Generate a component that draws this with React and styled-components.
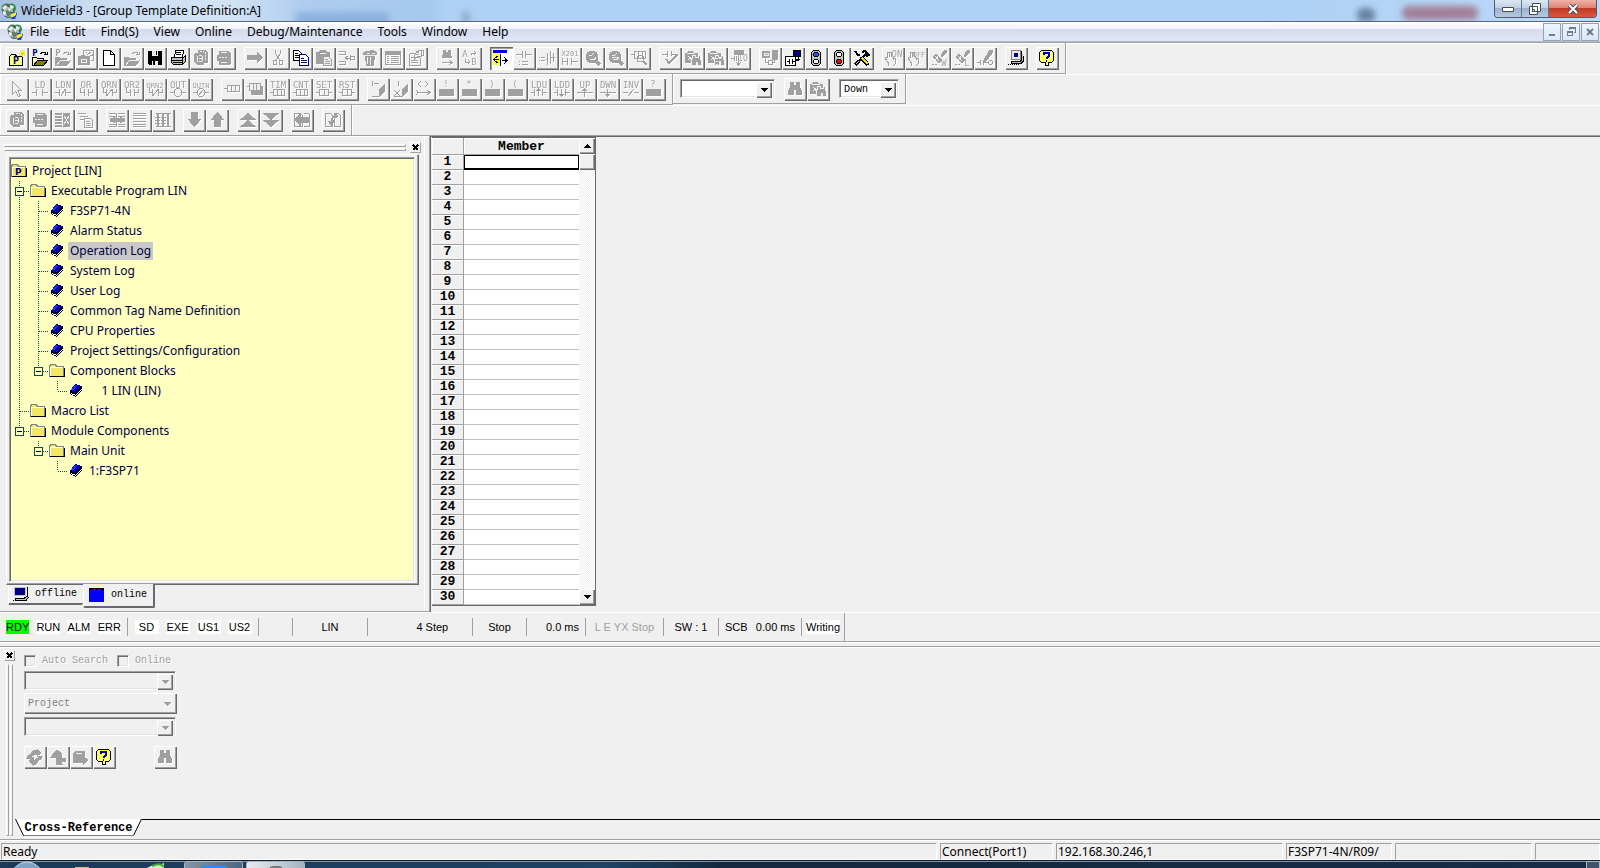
import React from "react";
import styled, { createGlobalStyle, css } from 'styled-components';

const GlobalStyle = createGlobalStyle `
    * { box-sizing: border-box; }
    body {
        margin: 0;
        background: #f0f0f0;
        color: #000;
        font-family: "Noto Sans", "Open Sans", sans-serif;
        font-size: 12px;
        line-height: 16px;
    }
    button, select, input { font: inherit; color: inherit; }
    ul { list-style: none; margin: 0; padding: 0; }
`

const mono = css `
    font-family: "Liberation Mono", monospace;
    font-size: 10px;
`

const sunken = css `
    border: 1px solid;
    border-color: #a0a0a0 #fff #fff #a0a0a0;
    box-shadow: inset 1px 1px 0 #696969, inset -1px -1px 0 #e3e3e3;
`

const raised = css `
    border: 0;
    background: #f0f0f0;
    box-shadow: inset 1px 1px 0 #fff, inset -1px -1px 0 #696969, inset -2px -2px 0 #a0a0a0;
`

const Shell = styled.div `
    display: flex;
    flex-direction: column;
    height: 100vh;
    min-height: 860px;
    overflow: hidden;
`

/* ---------- title and menu ---------- */

const TitleBar = styled.header `
    position: relative;
    display: flex;
    align-items: center;
    flex: none;
    height: 22px;
    padding-left: 1px;
    background: linear-gradient(90deg, #a3bfe2 0, #c9dcf1 90px, #d3e3f5 230px, #b0cdef 300px, #a6c8ee 430px, #afd1f5 445px, #afd1f5 80%, #bcd9f8 100%);
    border-bottom: 1px solid #5a6675;
    overflow: hidden;
`

const Title = styled.h1 `
    position: relative;
    flex: 1;
    margin: 0 0 0 4px;
    font-size: 12px;
    font-weight: 400;
    line-height: 20px;
`

const Smudge = styled.span `
    position: absolute;
    top: ${p => p.$top}px;
    right: ${p => p.$right}px;
    width: ${p => p.$width}px;
    height: 14px;
    border-radius: 6px;
    background: ${p => p.$color};
    filter: blur(3px);
`

const CaptionGroup = styled.div `
    position: relative;
    display: flex;
    align-self: flex-start;
    height: 18px;
    margin-right: 3px;
    border: 1px solid #4c5a6b;
    border-top: 0;
    border-radius: 0 0 4px 4px;
    overflow: hidden;
`

const CaptionButton = styled.button `
    display: flex;
    justify-content: center;
    align-items: center;
    width: ${p => p.$close ? 47 : 27}px;
    padding: 0;
    border: 0;
    border-right: ${p => p.$close ? '0' : '1px solid #65758a'};
    background: ${p => p.$close
        ? 'linear-gradient(#efb3a8 0, #dd8474 45%, #c03a24 50%, #d9583c 100%)'
        : 'linear-gradient(#dbe7f4 0, #c3d2e4 45%, #9bb0ca 50%, #b6cae2 100%)'};
`

const MenuBar = styled.nav `
    display: flex;
    align-items: center;
    flex: none;
    height: 20px;
    padding-left: 7px;
    background: linear-gradient(#fff 0, #f0f3f9 35%, #d4dbed 36%, #dfe5f7 95%);
    border-bottom: 1px solid #b6bccc;
`

const MenuList = styled.div `
    display: flex;
    gap: 15px;
    margin-left: 7px;
`

const MenuItem = styled.button `
    padding: 0;
    border: 0;
    background: none;
    line-height: 18px;
`

const MdiButtons = styled.div `
    display: flex;
    gap: 1px;
    margin-left: auto;
    padding-right: 1px;
`

const MdiButton = styled.button `
    display: flex;
    justify-content: center;
    align-items: center;
    width: 18px;
    height: 18px;
    padding: 0;
    border: 1px solid #93a3b5;
    background: linear-gradient(#eef5fc, #d8e8f8);
`

/* ---------- toolbars ---------- */

const ToolRow = styled.div `
    display: flex;
    flex: none;
    height: 31px;
    box-shadow: inset 0 1px 0 #fff;
`

const FirstRow = styled(ToolRow) `
    height: 32px;
    border-top: 1px solid #a0a0a0;
`

const LastRow = styled(ToolRow) `
    height: 30px;
`

const ToolBar = styled.div `
    display: flex;
    align-items: flex-start;
    gap: 8px;
    height: 31px;
    padding: 4px 6px 0;
    border-right: 1px solid #a0a0a0;
    border-bottom: 1px solid #a0a0a0;
    box-shadow: inset 0 1px 0 #fff, 1px 0 0 #fff, inset 1px 0 0 #fff;
`

const SearchBar = styled(ToolBar) `
    height: 30px;
    gap: 9px;
    padding-left: 7px;
    label { margin-top: 1px; }
`

const BlockBar = styled(ToolBar) `
    height: 30px;
    border-bottom: 0;
`

const ToolGroup = styled.div `
    display: flex;
`

const ToolButton = styled.button `
    width: 23px;
    height: 23px;
    padding: 3px 4px 4px 3px;
    color: #000;
    ${raised}
    &:disabled { color: #a0a0a0; }
    &:disabled svg { filter: drop-shadow(1px 1px 0 #fff); }
    ${p => p.$pressed && css `
        background: #fafafa;
        box-shadow: inset 1px 1px 0 #696969, inset 2px 2px 0 #a0a0a0, inset -1px -1px 0 #fff;
    `}
`

const IconSvg = styled.svg `
    display: block;
    flex: none;
    overflow: visible;
    shape-rendering: crispEdges;
    fill: none;
    stroke: currentColor;
    stroke-width: 1;
    text {
        font-family: "DejaVu Sans Mono", monospace;
        fill: currentColor;
        stroke: none;
        text-anchor: middle;
    }
    .f { fill: currentColor; }
`

const Combo = styled.label `
    display: grid;
    grid-template-columns: 1fr 16px;
    width: ${p => p.$width}px;
    height: ${p => p.$flat ? 21 : 19}px;
    padding: 2px;
    background: ${p => p.$disabled ? '#f0f0f0' : '#fff'};
    ${mono}
    ${p => p.$flat ? raised : sunken}
`

const ComboSelect = styled.select `
    grid-area: 1 / 1 / 2 / 3;
    width: 100%;
    padding: 0 0 0 2px;
    border: 0;
    appearance: none;
    background: transparent;
    &:disabled { color: #808080; opacity: 1; }
`

const ComboArrow = styled.span `
    grid-area: 1 / 2 / 2 / 3;
    display: flex;
    justify-content: center;
    align-items: center;
    pointer-events: none;
    color: ${p => p.$disabled ? '#a0a0a0' : '#000'};
    ${p => !p.$flat && raised}
`

/* ---------- workspace ---------- */

const Workspace = styled.main `
    display: flex;
    flex: 1;
    min-height: 0;
    border-top: 1px solid #a0a0a0;
`

const ProjectDock = styled.aside `
    display: flex;
    flex-direction: column;
    width: 430px;
    flex: none;
    padding: 5px 10px 5px 6px;
    border-right: 1px solid #a0a0a0;
    border-bottom: 1px solid #a0a0a0;
    box-shadow: inset 0 1px 0 #fff, inset -4px 0 0 #f0f0f0, inset -5px 0 0 #fff;
`

const DockHeader = styled.div `
    display: flex;
    align-items: center;
    height: 13px;
    gap: 4px;
    margin: 0 -2px;
`

const Gripper = styled.div `
    display: grid;
    flex: 1;
    gap: 1px;
    ${p => p.$vertical ? 'grid-template-columns: 3px 3px;' : 'grid-template-rows: 3px 3px;'}
    span {
        border: 1px solid;
        border-color: #fff #a0a0a0 #a0a0a0 #fff;
    }
`

const CloseButton = styled.button `
    display: flex;
    justify-content: center;
    align-items: center;
    width: 11px;
    height: 11px;
    flex: none;
    padding: 0;
    border: 1px solid;
    border-color: #fff #a0a0a0 #a0a0a0 #fff;
    background: #f0f0f0;
`

const TreeFrame = styled.div `
    flex: 1;
    min-height: 0;
    padding: 2px 3px 2px 2px;
    border: 1px solid;
    border-color: #fff #696969 #696969 #fff;
    box-shadow: inset -1px -1px 0 #a0a0a0;
`

const Tree = styled.ul `
    height: 100%;
    background: #ffffc0;
    color: #000040;
    overflow: hidden;
    ${sunken}
    && { padding-top: 3px; }
`

const TreeRow = styled.li `
    display: flex;
    align-items: center;
    height: 20px;
`

const TreeLabel = styled.span `
    padding: 0 2px;
    margin-left: 1px;
    white-space: pre;
    line-height: 18px;
    background: ${p => p.$selected ? '#c8c8c8' : 'transparent'};
`

const TabStrip = styled.div `
    display: flex;
    align-items: flex-start;
    height: 21px;
    padding-left: 2px;
    ${mono}
`

const DockTab = styled.button `
    display: flex;
    align-items: center;
    gap: 6px;
    height: ${p => p.$active ? 24 : 20}px;
    margin-top: ${p => p.$active ? -1 : 0}px;
    padding: 0 6px 0 ${p => p.$active ? 5 : 4}px;
    border: 1px solid;
    border-width: 0 2px 2px 1px;
    border-color: #fff #696969 #696969 #fff;
    border-right: ${p => p.$active ? '2px solid #696969' : '0'};
    border-radius: 0 0 2px 2px;
    background: #f0f0f0;
    font-family: inherit;
`

const MdiArea = styled.section `
    flex: 1;
    min-width: 0;
    padding-left: 1px;
    border-top: 1px solid #696969;
    border-left: 1px solid #696969;
`

const MemberWindow = styled.div `
    display: flex;
    width: 164px;
    border: 1px solid #696969;
    border-width: 1px 1px 1px 0;
`

const MemberTable = styled.table `
    width: 147px;
    table-layout: fixed;
    border-collapse: separate;
    border-spacing: 0;
    background: #fff;
    font-family: "Liberation Mono", monospace;
    font-size: 13px;
    line-height: 14px;
    th {
        height: 15px;
        padding: 0;
        background: #f0f0f0;
        border-right: 1px solid #a0a0a0;
        border-bottom: 1px solid #a0a0a0;
        box-shadow: inset 1px 1px 0 #fff;
    }
    thead th {
        height: 17px;
        padding-top: 2px;
    }
    thead th:last-child { border-right: 0; }
    td {
        height: 15px;
        padding: 0;
        border-bottom: 1px solid #c0c0c0;
    }
`

const CurrentCell = styled.td `
    box-shadow: inset 1px 1px 0 #000, inset -1px -1px 0 #000;
    border-bottom-color: #000 !important;
`

const ScrollBar = styled.div `
    display: flex;
    flex-direction: column;
    justify-content: space-between;
    width: 16px;
    background: repeating-conic-gradient(#fff 0 25%, #f0f0f0 0 50%) 0 0 / 2px 2px;
`

const ScrollButton = styled.button `
    display: flex;
    justify-content: center;
    align-items: center;
    width: 16px;
    height: 16px;
    padding: 0;
    ${raised}
`

/* ---------- cpu status ---------- */

const CpuBar = styled.div `
    display: flex;
    flex: none;
    height: 30px;
    border-top: 1px solid #fff;
    border-bottom: 1px solid #a0a0a0;
    box-shadow: 0 1px 0 #fff;
    font-family: "Liberation Sans", Arial, sans-serif;
    font-size: 11px;
    line-height: 14px;
`

const CpuCells = styled.div `
    display: flex;
    align-items: center;
    border-right: 1px solid #a0a0a0;
`

const CpuCell = styled.div `
    display: flex;
    align-items: center;
    justify-content: ${p => p.$align || 'center'};
    gap: 7px;
    width: ${p => p.$width}px;
    height: 18px;
    padding: 0 6px;
    white-space: nowrap;
    color: ${p => p.$off ? '#a0a0a0' : '#000'};
    border-right: ${p => p.$last ? '0' : '1px solid #a0a0a0'};
`

const Lamp = styled.span `
    width: ${p => p.$wide ? 34 : 24}px;
    background: ${p => p.$on ? '#00ff00' : '#fff'};
    text-align: center;
`

/* ---------- cross reference ---------- */

const CrossDock = styled.section `
    display: flex;
    flex: none;
    height: 194px;
    margin-top: 4px;
    padding: 3px 0 3px 4px;
    border-top: 1px solid #a0a0a0;
    border-bottom: 1px solid #a0a0a0;
    box-shadow: inset 0 1px 0 #fff, 0 1px 0 #fff;
`

const CrossSide = styled.div `
    display: flex;
    flex-direction: column;
    gap: 3px;
    width: 11px;
`

const VerticalGrip = styled(Gripper) `
    margin-left: 2px;
`

const CrossBody = styled.div `
    display: flex;
    flex: 1;
    flex-direction: column;
    justify-content: space-between;
`

const CrossForm = styled.form `
    display: flex;
    flex-direction: column;
    gap: 3px;
    width: 162px;
    padding: 3px 0 0 9px;
    ${mono}
`

const CheckRow = styled.div `
    display: flex;
    gap: 9px;
    height: 15px;
    white-space: nowrap;
`

const Check = styled.label `
    display: flex;
    align-items: center;
    gap: 6px;
    color: #a0a0a0;
    text-shadow: 1px 1px 0 #fff;
`

const CheckInput = styled.input `
    width: 12px;
    height: 12px;
    margin: 0;
    appearance: none;
    ${sunken}
`

const CrossButtons = styled.div `
    display: flex;
    justify-content: space-between;
    padding-top: 7px;
`

const SheetTabs = styled.div `
    display: flex;
    height: 17px;
`

const SheetTab = styled.button `
    position: relative;
    width: 127px;
    padding: 1px 0 0;
    border: 0;
    background: none;
    font-family: "Liberation Mono", monospace;
    font-size: 12px;
    font-weight: 700;
    line-height: 16px;
    svg {
        position: absolute;
        top: 0;
        left: 0;
    }
    span { position: relative; }
`

const SheetLine = styled.div `
    flex: 1;
    border-top: 1px solid #000;
`

/* ---------- bottom ---------- */

const StatusBar = styled.footer `
    display: flex;
    flex: none;
    gap: 3px;
    height: 20px;
    padding: 3px 0 0 1px;
    line-height: 15px;
`

const StatusCell = styled.div `
    flex: ${p => p.$width ? `0 0 ${p.$width}px` : '1'};
    height: 17px;
    padding-left: 1px;
    border: 1px solid;
    border-color: #a0a0a0 #fff #fff #a0a0a0;
    white-space: nowrap;
    overflow: hidden;
`

const TaskBar = styled.div `
    display: flex;
    align-items: flex-start;
    flex: none;
    height: 8px;
    background: linear-gradient(90deg, #1c3a58 0, #1d4263 38%, #14293f 45%, #152c45 100%);
    border-top: 1px solid #10202f;
    box-shadow: inset 0 1px 0 #8094a8;
    overflow: hidden;
`

const TaskItem = styled.button `
    display: flex;
    justify-content: center;
    width: 59px;
    height: 20px;
    margin-right: 3px;
    padding: 4px 0 0;
    border: 1px solid #a9b8c6;
    border-radius: 3px;
    background: ${p => p.$active ? 'linear-gradient(90deg, #e8ecf0, #a5b3c0)' : 'linear-gradient(90deg, #8495a5, #4b6580)'};
    span {
        width: ${p => p.$active ? 14 : 28}px;
        height: 12px;
        border-radius: 4px;
        background: ${p => p.$active ? '#777' : '#1e90ff'};
    }
`

const StartSvg = styled.svg `
    flex: none;
    margin-right: 19px;
`

const ShowDesktop = styled.span `
    width: 14px;
    height: 20px;
    margin-left: auto;
    border: 1px solid #a9b8c6;
    background: #3f5468;
`

/* ---------- icon drawings, all on a 16 x 16 grid ---------- */

const gate = (label, lower) => (
    <>
        <text x="8" y="7" fontSize={label.length > 3 ? 7 : 9}>{label}</text>
        <path d={lower} />
    </>
)

const CONTACT = 'M0 11.5h5M4.5 8v7M10.5 8v7M11 11.5h5'
const NOT = 'M0 11.5h5M4.5 8v7M6 14.5l4-6M10.5 8v7M11 11.5h5'
const BRANCH = 'M2.5 7v4.5h4M6.5 8v7M10.5 8v7M11 11.5h3.5v-4'
const BRANCH_NOT = 'M2.5 7v4.5h3M5.5 8v7M6 14.5l5-6M11.5 8v7M12 11.5h3.5v-4'
const BOX = 'M0 11.5h3M3.5 8.5h11v6h-11zM7.5 8.5v6M11.5 8.5v6'
const SMALL_BOX = 'M0 11.5h3M3.5 8.5h9v6h-9zM8.5 8.5v6M13 11.5h3'

const folder = (front, back, line) => (
    <>
        <path d="M.5 15.5v-8h4l1 1h6v2" fill={back} stroke={line} />
        <path d="M1.5 15.5l4-5h10l-4 5z" fill={front} stroke={line} />
        <path d="M8 3.5h1l1-1h3l1 2M12 4.5h3v-3" />
    </>
)

// stacked sheets with a block number on the front one
const pages = (
    <>
        <path className="f" d="M5.5 .5h7l2 2v10h-3v-9h-6z" />
        <path className="f" d="M2.5 3.5h8v11h-6l-3-3v-7z" />
        <path d="M4 6v6M6 5.5h3M6 8.5h3M6 11.5h3M9.500 6v5" stroke="#f0f0f0" />
        <path d="M12.5 2v8M7 1.500h4" stroke="#f0f0f0" strokeDasharray="2 1" />
    </>
)

const printout = (
    <>
        <path className="f" d="M3.5 4.500v-3h9l2 2v6h-2v-5z" />
        <path className="f" d="M1.5 5.5h11v5h-11zM3.500 11.500h9l2-1v3l-2 1h-9z" />
        <path d="M3 7.5h2M6 7.5h2M9 7.5h2M5 12.500h6M5 2.500h6" stroke="#f0f0f0" />
    </>
)

const lens = (
    <>
        <circle cx="7" cy="7" r="6" fill="currentColor" />
        <path d="M11 11l4 4" strokeWidth="3" />
        <path d="M4 5.5h2l3-2M5 9.5h4l2-2" stroke="#f0f0f0" />
    </>
)

const binoculars = (
    <path className="f" d="M3.500 1.500h3v3h3v-3h3v4l2 5v3h-5v-5h-3v5h-5v-3l2-5z" />
)

const searchFolder = (
    <>
        <path className="f" d="M.5 3.500h2l1-2h4l1 2h4v9h-12z" />
        <path d="M2 3.500h8" stroke="#f0f0f0" />
        <path d="M3 6l5 6M3 10l3-3" stroke="#f0f0f0" />
        <path className="f" d="M8 5h2v2h3v-2h2l1 5v5h-4v-3h-1v3h-5v-3z" stroke="#f0f0f0" />
    </>
)

const brush = letter => (
    <>
        <path className="f" d="M10 5l4-5h2l-1 3-4 4zM5 4l6 6-3 3-6-6z" />
        <path d="M4 6l4 5M8 5l-4 5M0 13h1M3 15h1M2 11h1" stroke="#f0f0f0" />
        <path d="M1 14.500h2M4 14.500h2" />
        <text x="13" y="16" fontSize="9">{letter}</text>
    </>
)

const hand = word => (
    <>
        <path d="M3.500 16v-3l-3-4v-2h2v-5h2v5M4.500 4v-2h2v5M6.500 7h2v3M8.500 8h2v5l-2 3" />
        <text x={word.length > 2 ? 11 : 12} y="7" fontSize={word.length > 2 ? 7 : 9}>{word}</text>
    </>
)

const help = (
    <>
        <path d="M2.500 .5h10l2 2v8l-2 2h-3v3h-3v-3h-4l-2-2v-8z" fill="#ffff60" stroke="#000" />
        <path d="M5 5v-2h5v3l-2.500 2v1M7 11h1" stroke="#00009c" strokeWidth="2" />
    </>
)

const light = (top, bottom) => (
    <>
        <path d="M5.500 .5h5l2 2v11l-2 2h-5l-2-2v-11z" fill="#c0c0c0" stroke="#000" />
        <circle cx="8" cy="4.500" r="2.500" fill={top} stroke="#000" />
        <circle cx="8" cy="11.500" r="2.500" fill={bottom} stroke="#000" />
    </>
)

const computer = (
    <>
        <path d="M3.500 .5h9v9h-9z" fill="#e8e8e8" stroke="#808080" />
        <path d="M6 3h4v4h-4z" fill="#000080" stroke="none" />
        <path d="M13.500 1v9l-1 1h-9v2h10l2-2v-5" stroke="#000" fill="#c0c0c0" />
        <path d="M0 14.500h11" stroke="#000" strokeDasharray="1 1" />
    </>
)

const block = mark => (
    <>
        <text x="7" y="6" fontSize="9">{mark}</text>
        <path className="f" d="M.5 8.500h14v6h-14z" />
    </>
)

const ICONS = {
    newProject: (
        <>
            <path d="M.5 15.500v-9l2-2h4l1 2h6v9z" fill="#ffff80" stroke="#000" />
            <text x="7" y="14" fontSize="10" fontWeight="700" style={{ fill: '#000080' }}>P</text>
            <path d="M13.500 0v7M10 3.500h6M11 1l5 5M16 1l-5 5" stroke="#f0e000" />
        </>
    ),
    openProject: (
        <>
            {folder('#808000', '#ffff80', '#000')}
            <text x="3" y="6" fontSize="9" fontWeight="700" style={{ fill: '#000080' }}>P</text>
        </>
    ),
    openProjectOff: (
        <>
            {folder('currentColor', 'currentColor', 'currentColor')}
            <path d="M5 10.500h10M5 11l-3 4" stroke="#f0f0f0" />
            <text x="3" y="6" fontSize="9" fontWeight="700">P</text>
        </>
    ),
    closeProject: (
        <>
            <path d="M5.500 5v-4.500h10v10h-3M8 2.500h1M9 5l4-3M12 5.500h2v-2" />
            <path className="f" d="M.5 6.500h2l1-1h3l1 1h4v8h-11z" />
            <path d="M3 9.500h6M3 9v4M3 12.500h6M8.500 9v4" stroke="#f0f0f0" />
        </>
    ),
    newFile: <path d="M2.500 .5h7l4 4v11h-11zM9.500 .5v4h4" fill="#fff" />,
    open: (
        <>
            {folder('currentColor', 'currentColor', 'currentColor')}
            <path d="M5 10.500h10M5 11l-3 4" stroke="#f0f0f0" />
        </>
    ),
    save: (
        <>
            <path className="f" d="M1.500 1.500h13v13h-12l-1-1z" />
            <path d="M5 1h6v5h-6zM5 11h6v4h-6z" fill="#f0f0f0" stroke="none" />
            <path d="M9 1h1v4h-1zM6 11h2v4h-2z" fill="#000" stroke="none" />
        </>
    ),
    print: (
        <>
            <path d="M4.500 7.500l1-7h8l-1 7" fill="#fff" />
            <path d="M6 2.500h5M6 4.500h5" />
            <path d="M1.500 7.500h12l2-2v6l-3 3h-9l-2-2z" fill="#c0c0c0" />
            <path d="M2 10.500h11M3 12.500h9M12.500 8v6" />
            <path d="M8 11.500h3" stroke="#e0e000" />
        </>
    ),
    pages,
    printout,
    go: <path className="f" d="M.5 5.500h10v-3l5 5-5 5v-3h-10z" />,
    cut: (
        <>
            <path d="M5.500 0v3l4 7M10.500 0v3l-4 7" />
            <path d="M3.500 10.500h3v4h-3zM9.500 10.500h3v4h-3z" />
        </>
    ),
    copy: (
        <>
            <path d="M.5 .5h5l3 3v7h-8z" fill="#fff" />
            <path d="M2 3.500h3M2 5.500h5M2 7.500h5" />
            <path d="M6.500 4.500h6l3 3v8h-9z" fill="#fff" stroke="#000080" />
            <path d="M8 8.500h3M8 10.500h6M8 12.500h6" stroke="#000080" />
        </>
    ),
    paste: (
        <>
            <path className="f" d="M.5 2.500h3l1-2h5l1 2h3v11h-13z" />
            <path d="M4 3.500h6" stroke="#f0f0f0" />
            <path d="M7.500 6.500h5l3 3v6h-8z" fill="#f0f0f0" />
            <path d="M9 9.500h3M9 11.500h5M9 13.500h5" />
        </>
    ),
    insertRow: <path d="M0 1.500h6.500v3h-6.500M0 11.500h6.500v3h-6.500M7 8h5M8.500 6l-2 2 2 2M11.500 5v6M11.500 6.500h4v3h-4" />,
    trash: (
        <>
            <path className="f" d="M1.500 2.500l3-1h3l1-1h3l3 2v2h-13z" />
            <path className="f" d="M3.500 5.500h9l-1 10h-7z" />
            <path d="M5.500 7v7M8.500 7v8M5 3.500h3M10 3.500h3M2 5.500h12" stroke="#f0f0f0" />
        </>
    ),
    table: (
        <>
            <path d="M.5 1.500h15v13h-15z" />
            <path className="f" d="M1 2h14v2h-14z" />
            <path d="M2 6.500h2M6 6.500h8M2 8.500h2M6 8.500h8M2 10.500h2M6 10.500h8M2 12.500h2M6 12.500h8" />
        </>
    ),
    props: (
        <>
            <path d="M1.500 3.500h6M1.500 3.500v12h11v-8M3 7.500h3M3 10.500h7M3 12.500h7" />
            <path d="M6.500 6l2-4 4-2h3v5l-4 2h-3l-2 2z" />
            <path d="M8 4.500h3M9 2.500h2M9 6.500h2M13 1v4" />
        </>
    ),
    find: (
        <>
            <path className="f" d="M4.500 .5h2v2h3v-2h2v3l1 4h-4v-2h-1v2h-4l1-4z" />
            <path d="M3 12.500h10M10 10l3 2.500-3 2.500" />
        </>
    ),
    replace: (
        <>
            <text x="3" y="7" fontSize="9">A</text>
            <text x="12" y="15" fontSize="9">B</text>
            <path d="M9.500 5v-2h4M12 1l2 2-2 2M3.500 9v3h4M6 10l2 2-2 2" />
        </>
    ),
    insertCol: (
        <>
            <path d="M0 3h7v12h-7z" fill="#ffff30" stroke="none" />
            <path d="M0 1.500h14" stroke="#00f" strokeWidth="3" />
            <path d="M7.500 4v12M6 9.500h-5M4.500 6l-4 3.500 4 3.500M9 10.500h5M11 7l3 3.500-3 3.500" stroke="#000" />
        </>
    ),
    contactA: <path d="M0 4.500h6M6.500 1v7M9.500 1v7M10 4.500h6M3 11.500h1M3 14.500h1M6 11.500h6M6 14.500h6" />,
    contactB: <path d="M0 7.500h1M0 10.500h1M2 7.500h4M2 10.500h4M7 9.500h2M8.500 3v12M11.500 1v13M12 7.500h4M14.500 3v9" />,
    cross: (
        <>
            <text x="8" y="6" fontSize="7">X201</text>
            <path d="M0 11.500h5M.5 8v7M5.500 8v7M9.500 8v7M10 11.500h6" />
        </>
    ),
    zoomIn: lens,
    zoomOut: <>{lens}<path d="M4 7.500h6" stroke="#f0f0f0" /></>,
    zoomBox: (
        <>
            <path d="M0 4.500h3M3.500 1.500h11v7h-11zM7.500 1v8M11.500 1v8" />
            <circle cx="9.500" cy="8.500" r="3.500" />
            <path d="M12 11l4 4" strokeWidth="2" />
        </>
    ),
    check: (
        <>
            <path d="M0 4.500h5M5.500 1v6M9.500 1v5M10 4.500h6" />
            <path d="M4 9l3 4 8-8" strokeWidth="2" />
        </>
    ),
    searchFolder,
    searchFolderDots: <>{searchFolder}<path d="M8 8h6M8 11h6M8 14h6" stroke="#f0f0f0" strokeDasharray="2 1" /></>,
    io: (
        <>
            <path className="f" d="M3.500 .5h9v4h-9z" />
            <path d="M0 8.500h3M3.500 6v5M5.500 6v5M7.500 5v10M5 12l2.500 3 2.500-3" />
            <text x="12" y="11" fontSize="8">IO</text>
        </>
    ),
    transfer: (
        <>
            <path className="f" d="M.5 1.500h7v6h-7zM10.500 .5h5v9h-5z" />
            <path d="M2 3h4v2h-4z" stroke="#f0f0f0" />
            <path d="M3.500 8v4.500h3M12.500 10v2.500h-2" />
            <circle cx="8.500" cy="12.500" r="2.500" />
        </>
    ),
    online: (
        <>
            <path d="M8.500 .5h7v6h-7z" fill="#000080" stroke="#000" />
            <path d="M11 9h4M13.500 7v3h-3" />
            <path d="M.5 6.500h10v9h-10z" fill="#fff" />
            <path d="M2 11.500h2M4.500 9v5M7.500 9v5M8 11.500h2" />
        </>
    ),
    run: light('#0060ff', '#fff'),
    stop: light('#fff', '#f00000'),
    tools: (
        <>
            <path d="M3 13l8-8" strokeWidth="2" />
            <path d="M1 1l3 4h2" strokeWidth="2" />
            <path d="M8 2l3-1 4 4-2 1-2-2" strokeWidth="2" />
            <path d="M7 7l7 8" stroke="#000" strokeWidth="4" />
            <path d="M8 8l6 6" stroke="#e8e000" strokeWidth="2" />
            <path d="M1 15l4-4" strokeWidth="3" />
            <path d="M2 14l3-3" stroke="#e8e000" />
        </>
    ),
    on: hand('ON'),
    off: hand('OFF'),
    brushW: brush('W'),
    brushL: brush('L'),
    pen: (
        <>
            <path className="f" d="M8 8l5-8h2v3l-5 7-3 2z" />
            <path d="M0 12.500h3M3.500 10v5M6.500 10v5M7 12.500h5" />
            <circle cx="13.500" cy="12.500" r="2" />
        </>
    ),
    computer,
    help,
    pointer: <path d="M3.500 .5l9 9h-4l3 5-2 1-3-5-3 3z" />,
    instr: <path d="M0 7.500h3M3.500 4.500h12v6h-12zM7.500 4.500v6M11.500 4.500v6" />,
    instrs: (
        <>
            <path className="f" d="M4.500 5.500h11v8h-11z" />
            <path d="M2.500 2.500h11v7h-11z" fill="#f0f0f0" />
            <path d="M0 5.500h2M6.500 3v6M9.500 3v6" />
        </>
    ),
    ladderUp: (
        <>
            <path d="M2.500 0v5M4 2.500h5M2 15.500h8" />
            <path className="f" d="M9.500 8.500l5-5v7l-5 5z" />
        </>
    ),
    ladderX: (
        <>
            <path d="M5.500 0v5M1 9l6 6M7 9l-6 6M1 15.500h8" />
            <path className="f" d="M9.500 8.500l5-5v7l-5 5z" />
        </>
    ),
    compare: <path d="M5 0l-3 3 3 3M9 0l3 3-3 3M0 9l2 2.500-2 2.500M2 11.500h12M11 9l3 2.500-3 2.500" />,
    book: (
        <>
            <path d="M0 1.500h7M0 4.500h7M0 7.500h7M0 10.500h7M0 13.500h7" strokeWidth="2" />
            <path className="f" d="M8.500 1.500h6v13h-6z" />
            <path d="M9 4l5 8M14 4l-5 8" stroke="#f0f0f0" />
        </>
    ),
    outline: (
        <>
            <path d="M0 1.500h8M2 4.500h8M2 7.500h4" />
            <path d="M6.500 6.500h6l2 2v7h-8zM8 9.500h4M8 11.500h5M8 13.500h5" />
        </>
    ),
    gridA: (
        <>
            <path d="M0 1.500h7M9 1.500h7M0 4.500h7M9 4.500h7M0 12.500h7M9 12.500h7M0 14.500h7M9 14.500h7M7.500 1v14" />
            <path className="f" d="M1 6.500h14v3h-14z" />
            <path d="M4.500 5v6M11.500 5v6" strokeWidth="2" />
        </>
    ),
    lines: <path d="M1 1.500h13M1 3.500h13M1 6.500h13M1 9.500h13M1 12.500h13M1 14.500h13" />,
    gridB: (
        <>
            <path d="M.5 1.500h15M.5 14.500h15" />
            <path d="M3 2v13M7.500 2v13M12.500 2v13" strokeWidth="2" />
            <path d="M0 5.500h15M0 8.500h15M0 11.500h15" strokeDasharray="2 1" />
        </>
    ),
    down: <path className="f" d="M5.500 .5h6v7h3l-6 7-6-7h3z" />,
    up: <path className="f" d="M5.500 14.500h6v-7h3l-6-7-6 7h3z" />,
    top: <path className="f" d="M1 7.500l7-6 7 6zM1 14.500l7-6 7 6z" />,
    bottom: <path className="f" d="M1 1.500l7 6 7-6zM1 8.500l7 6 7-6z" />,
    copyBlock: (
        <>
            <path d="M.5 1.500h5l3 2v11h-8zM9.500 1.500h5l1 1v12h-6" />
            <path className="f" d="M1 7.500l5-5v3h8v5h-8v3z" />
        </>
    ),
    compareBlock: (
        <>
            <path d="M.5 1.500h5l2 2v11h-7zM9.500 1.500h4l2 2v11h-6z" />
            <path d="M7 14v-6q0-4 5-4M9 2l3 2-3 2M4 9l2 3 3-3" strokeWidth="2" />
        </>
    ),
    binoculars,
    refresh: (
        <>
            <path className="f" d="M4 5l3-4h3v-1l4 4-4 3v-2h-2l-2 2zM12 11l-3 4h-3v1l-4-4 4-3v2h2l2-2z" />
            <path className="f" d="M0 9l3-4 3 4zM10 7h6l-3 4z" />
        </>
    ),
    upload: <path className="f" d="M1 8l6-7 4 3v5h4v3h-5l2 3h-6v-7z" />,
    jump: (
        <>
            <path className="f" d="M.5 5l3-3h8v8h-3v3h-8z" />
            <path className="f" d="M9 7l6 4-5 5v-3h-4v-3h3z" />
            <path d="M3 4.500h6" stroke="#f0f0f0" />
        </>
    ),
}

const GATES = {
    LD: CONTACT,
    LDN: NOT,
    OR: BRANCH,
    ORN: BRANCH_NOT,
    OR2: BRANCH,
    ORN2: BRANCH_NOT,
    OUT: 'M0 11.500h4M4.500 9.500l2-2h3l2 2v4l-2 2h-3l-2-2zM12 11.500h4',
    OUTN: 'M0 11.500h4M4.500 9.500l2-2h3l2 2v4l-2 2h-3l-2-2zM5 15l6-7M12 11.500h4',
    TIM: BOX,
    CNT: BOX,
    SET: SMALL_BOX,
    RST: SMALL_BOX,
    LDU: 'M0 11.500h3M3.500 8v7M7.500 8v7M5.500 10l2-2 2 2M11.500 8v7M12 11.500h4',
    LDD: 'M0 11.500h3M3.500 8v7M7.500 8v7M5.500 13l2 2 2-2M11.500 8v7M12 11.500h4',
    UP: 'M0 11.500h16M7.500 8v8M5.500 10l2-2 2 2',
    DWN: 'M0 11.500h16M7.500 8v8M5.500 13l2 2 2-2',
    INV: 'M0 11.500h5M5 15l6-7M11 11.500h5',
}

const Icon = ({ name }) => (
    <IconSvg width="16" height="16" viewBox="0 0 16 16" aria-hidden="true">
        {GATES[name] ? gate(name, GATES[name]) : name.startsWith('=') ? block(name.slice(1)) : ICONS[name]}
    </IconSvg>
)

// enabled buttons; everything else is greyed out while online
const ENABLED = ['newProject', 'openProject', 'newFile', 'save', 'print', 'copy', 'insertCol', 'online', 'run', 'stop', 'tools', 'computer', 'help']

const MAIN_GROUPS = [
    ['newProject', 'openProject', 'openProjectOff', 'closeProject', 'newFile', 'open', 'save', 'print', 'pages', 'printout'],
    ['go', 'cut', 'copy', 'paste', 'insertRow', 'trash', 'table', 'props'],
    ['find', 'replace'],
    ['insertCol', 'contactA', 'contactB', 'cross', 'zoomIn', 'zoomOut', 'zoomBox'],
    ['check', 'searchFolder', 'searchFolderDots', 'io'],
    ['transfer', 'online', 'run', 'stop', 'tools'],
    ['on', 'off', 'brushW', 'brushL', 'pen'],
    ['computer'],
    ['help'],
]

const LADDER_GROUPS = [
    ['pointer', 'LD', 'LDN', 'OR', 'ORN', 'OR2', 'ORN2', 'OUT', 'OUTN'],
    ['instr', 'instrs', 'TIM', 'CNT', 'SET', 'RST'],
    ['ladderUp', 'ladderX', 'compare', '=!', '=*', '=)', '=(', 'LDU', 'LDD', 'UP', 'DWN', 'INV', '=?'],
]

const BLOCK_GROUPS = [
    ['pages', 'printout', 'book', 'outline'],
    ['gridA', 'lines', 'gridB'],
    ['down', 'up'],
    ['top', 'bottom'],
    ['copyBlock'],
    ['compareBlock'],
]

const MENUS = ['File', 'Edit', 'Find(S)', 'View', 'Online', 'Debug/Maintenance', 'Tools', 'Window', 'Help']

const Tools = ({ names }) => (
    <ToolGroup>
        {names.map(name => (
            <ToolButton key={name} type="button" aria-label={name} disabled={!ENABLED.includes(name)} $pressed={name === 'insertCol'}>
                <Icon name={name} />
            </ToolButton>
        ))}
    </ToolGroup>
)

const ArrowGlyph = ({ up }) => (
    <svg width="7" height="4" viewBox="0 0 7 4" fill="currentColor" shapeRendering="crispEdges" aria-hidden="true">
        <path d={up ? 'M3 0h1v1h1v1h1v1h1v1H0V3h1V2h1V1h1z' : 'M0 0h7v1H6v1H5v1H4v1H3V3H2V2H1V1H0z'} />
    </svg>
)

const CrossGlyph = () => (
    <svg width="7" height="7" viewBox="0 0 7 7" stroke="#000" strokeWidth="2" shapeRendering="crispEdges" aria-hidden="true">
        <path d="M1 1l5 5M6 1l-5 5" />
    </svg>
)

const ComboBox = ({ label, width, value, flat, disabled }) => (
    <Combo $width={width} $flat={flat} $disabled={disabled}>
        <ComboSelect aria-label={label} disabled={disabled} defaultValue={value}>
            <option value={value}>{value}</option>
        </ComboSelect>
        <ComboArrow $flat={flat} $disabled={disabled}><ArrowGlyph /></ComboArrow>
    </Combo>
)

const AppLogo = () => (
    <svg width="16" height="16" viewBox="0 0 16 16" aria-hidden="true">
        <circle cx="5.500" cy="5.500" r="5" fill="#4b6f5c" />
        <circle cx="10.500" cy="5" r="4.500" fill="#2f8d4c" />
        <circle cx="7.500" cy="9" r="5.500" fill="#a9b8b0" stroke="#3b4c44" />
        <path d="M1 5l3-3 3 2-4 3zM9 2l4 1-1 3-3-1z" fill="#e6f0ea" />
        <path d="M4 9l4-3 3 4-4 4z" fill="#5e7f6c" />
        <path d="M2 8l3 1-1 4-2-2zM7 5l3 1-2 3z" fill="#f4f7f5" />
        <path d="M10 9h5l1 2-2 5h-4l1-3z" fill="#1c3fd0" />
        <path d="M10 11l5-2v3l-3 2h-2z" fill="#f7ef1d" />
    </svg>
)

/* ---------- tree ---------- */

// guide cells per row: v line, t tee, l corner, m open node, n open node at the end of its branch
const NODES = [
    ['', 'project', 'Project [LIN]'],
    ['m', 'folder', 'Executable Program LIN'],
    ['vt', 'book', 'F3SP71-4N'],
    ['vt', 'book', 'Alarm Status'],
    ['vt', 'book', 'Operation Log'],
    ['vt', 'book', 'System Log'],
    ['vt', 'book', 'User Log'],
    ['vt', 'book', 'Common Tag Name Definition'],
    ['vt', 'book', 'CPU Properties'],
    ['vt', 'book', 'Project Settings/Configuration'],
    ['vn', 'folder', 'Component Blocks'],
    ['v l', 'book', '    1 LIN (LIN)'],
    ['t', 'folder', 'Macro List'],
    ['n', 'folder', 'Module Components'],
    [' n', 'folder', 'Main Unit'],
    ['  l', 'book', '1:F3SP71'],
]

const GUIDES = {
    v: 'M9.500 0v20',
    t: 'M9.500 0v20M10 10.500h10',
    l: 'M9.500 0v10M10 10.500h10',
    m: 'M9.500 0v20M10 10.500h10',
    n: 'M9.500 0v10M10 10.500h10',
}

const Guide = ({ kind }) => (
    <svg width="19" height="20" viewBox="0 0 19 20" shapeRendering="crispEdges" fill="none" aria-hidden="true">
        {GUIDES[kind] && <path d={GUIDES[kind]} stroke="#005050" strokeDasharray="1 1" />}
        {'mn'.includes(kind) && <path d="M5.500 6.500h8v8h-8z" fill="#ffffc0" stroke="#005050" />}
        {'mn'.includes(kind) && <path d="M7 10.500h5" stroke="#000" />}
    </svg>
)

const NodeIcon = ({ kind }) => (
    <svg width="19" height="18" viewBox="0 0 19 18" shapeRendering="crispEdges" fill="none" aria-hidden="true">
        {kind === 'book' ? (
            <>
                <path d="M3 9l5-7 7 2v4l-6 7-6-3z" fill="#000" />
                <path d="M4 11l5 2 6-7v1l-6 7-5-2z" fill="#fff" />
                <path d="M3 9l5-7 6 2-5 7z" fill="#0000a8" />
                <path d="M4 8l4-5 2 1-4 5z" fill="#2a2ae8" />
            </>
        ) : (
            <>
                <path d="M1.500 14.500v-10l1-2h5l1 2h7v10z" fill="#f0e860" stroke="#808080" />
                <path d="M2.500 14v-8.500h12" stroke="#fff" />
                <path d="M2 14.500h14.500v-9" stroke="#000" />
            </>
        )}
        {kind === 'project' && (
            <text x="5" y="13" fontFamily="DejaVu Sans, sans-serif" fontSize="9" fontWeight="700" fill="#000080">P</text>
        )}
    </svg>
)

const ROWS = Array.from({ length: 30 }, (_, i) => i + 1)

const App = () => {

    return (
        <Shell>
            <GlobalStyle />
            <TitleBar>
                <Smudge $top={12} $right={1210} $width={95} $color="#8db2df" />
                <Smudge $top={11} $right={1130} $width={8} $color="#8fabc9" />
                <Smudge $top={8} $right={225} $width={18} $color="#6683a0" />
                <Smudge $top={6} $right={122} $width={76} $color="#a27f98" />
                <AppLogo />
                <Title>WideField3 - [Group Template Definition:A]</Title>
                <CaptionGroup>
                    <CaptionButton type="button" aria-label="Minimize">
                        <svg width="12" height="6" viewBox="0 0 12 6" aria-hidden="true"><path d="M.5 1.500h11v4H.5z" fill="#fff" stroke="#444b5a" /></svg>
                    </CaptionButton>
                    <CaptionButton type="button" aria-label="Restore">
                        <svg width="12" height="12" viewBox="0 0 12 12" fill="#fff" stroke="#444b5a" aria-hidden="true"><path d="M3.500 .5h8v8h-8zM.5 3.500h8v8h-8zM3.500 6.500h2v2h-2z" /></svg>
                    </CaptionButton>
                    <CaptionButton type="button" aria-label="Close" $close>
                        <svg width="12" height="10" viewBox="0 0 12 10" aria-hidden="true"><path d="M2 1l8 8M10 1l-8 8" stroke="#444b5a" strokeWidth="4" /><path d="M2 1l8 8M10 1l-8 8" stroke="#fff" strokeWidth="2" /></svg>
                    </CaptionButton>
                </CaptionGroup>
            </TitleBar>
            <MenuBar>
                <AppLogo />
                <MenuList>
                    {MENUS.map(item => <MenuItem key={item} type="button">{item}</MenuItem>)}
                </MenuList>
                <MdiButtons>
                    <MdiButton type="button" aria-label="Minimize document">
                        <svg width="10" height="10" viewBox="0 0 10 10" aria-hidden="true"><path d="M2 8h6" stroke="#6b7d90" strokeWidth="2" /></svg>
                    </MdiButton>
                    <MdiButton type="button" aria-label="Restore document">
                        <svg width="10" height="10" viewBox="0 0 10 10" fill="none" stroke="#6b7d90" shapeRendering="crispEdges" aria-hidden="true"><path d="M3.500 3v-2.500h6v5h-2M3 1.500h6M1.500 4.500h5v4h-5zM1 5.500h6" /></svg>
                    </MdiButton>
                    <MdiButton type="button" aria-label="Close document">
                        <svg width="10" height="10" viewBox="0 0 10 10" aria-hidden="true"><path d="M2 2l6 6M8 2l-6 6" stroke="#6b7d90" strokeWidth="2" /></svg>
                    </MdiButton>
                </MdiButtons>
            </MenuBar>

            <FirstRow>
                <ToolBar>
                    {MAIN_GROUPS.map(names => <Tools key={names[0]} names={names} />)}
                </ToolBar>
            </FirstRow>
            <ToolRow>
                <ToolBar>
                    {LADDER_GROUPS.map(names => <Tools key={names[0]} names={names} />)}
                </ToolBar>
                <SearchBar>
                    <ComboBox label="Find text" width={95} value="" />
                    <Tools names={['binoculars', 'searchFolder']} />
                    <ComboBox label="Direction" width={60} value="Down" />
                </SearchBar>
            </ToolRow>
            <LastRow>
                <BlockBar>
                    {BLOCK_GROUPS.map(names => <Tools key={names[0]} names={names} />)}
                </BlockBar>
            </LastRow>

            <Workspace>
                <ProjectDock>
                    <DockHeader>
                        <Gripper><span /><span /></Gripper>
                        <CloseButton type="button" aria-label="Close project window"><CrossGlyph /></CloseButton>
                    </DockHeader>
                    <TreeFrame>
                        <Tree>
                            {NODES.map(([guides, icon, label]) => (
                                <TreeRow key={label}>
                                    {guides.split('').map((g, i) => <Guide key={i} kind={g} />)}
                                    <NodeIcon kind={icon} />
                                    <TreeLabel $selected={label === 'Operation Log'}>{label}</TreeLabel>
                                </TreeRow>
                            ))}
                        </Tree>
                    </TreeFrame>
                    <TabStrip>
                        <DockTab type="button">
                            <IconSvg width="16" height="16" viewBox="0 0 16 16" aria-hidden="true">
                                <path d="M1 1h11v8h-11z" fill="#000080" stroke="#c0c0c0" />
                                <path d="M14.500 1v9l-3 2h-9v2h11l2-3" fill="#c0c0c0" stroke="#000" />
                                <path d="M0 14.500h12" stroke="#000" strokeDasharray="1 1" />
                            </IconSvg>
                            offline
                        </DockTab>
                        <DockTab type="button" $active>
                            <IconSvg width="16" height="16" viewBox="0 0 16 16" aria-hidden="true">
                                <path d="M0 2h15v13h-15z" fill="#00f" stroke="none" />
                                <path d="M0 2h15" stroke="#000" strokeWidth="2" />
                                <path d="M4 2h2M9 2h2" stroke="#e00000" />
                                <path d="M5 4v11M10 4v11" stroke="#00c" />
                            </IconSvg>
                            online
                        </DockTab>
                    </TabStrip>
                </ProjectDock>

                <MdiArea>
                    <MemberWindow>
                        <MemberTable>
                            <colgroup><col width="32" /><col /></colgroup>
                            <thead>
                                <tr><th aria-label="Row" /><th scope="col">Member</th></tr>
                            </thead>
                            <tbody>
                                {ROWS.map(n => (
                                    <tr key={n}>
                                        <th scope="row">{n}</th>
                                        {n === 1 ? <CurrentCell /> : <td />}
                                    </tr>
                                ))}
                            </tbody>
                        </MemberTable>
                        <ScrollBar>
                            <div>
                                <ScrollButton type="button" aria-label="Scroll up"><ArrowGlyph up /></ScrollButton>
                                <ScrollButton type="button" aria-label="Scroll position" />
                            </div>
                            <ScrollButton type="button" aria-label="Scroll down"><ArrowGlyph /></ScrollButton>
                        </ScrollBar>
                    </MemberWindow>
                </MdiArea>
            </Workspace>

            <CpuBar>
                <CpuCells>
                    <CpuCell $width={128} $align="flex-start">
                        <Lamp $on>RDY</Lamp><Lamp>RUN</Lamp><Lamp>ALM</Lamp><Lamp>ERR</Lamp>
                    </CpuCell>
                    <CpuCell $width={131}>
                        <Lamp>SD</Lamp><Lamp>EXE</Lamp><Lamp>US1</Lamp><Lamp>US2</Lamp>
                    </CpuCell>
                    <CpuCell $width={34} />
                    <CpuCell $width={75}>LIN</CpuCell>
                    <CpuCell $width={105} $align="space-evenly"><span />4 Step</CpuCell>
                    <CpuCell $width={54}>Stop</CpuCell>
                    <CpuCell $width={59} $align="flex-end">0.0 ms</CpuCell>
                    <CpuCell $width={78} $off>L E YX Stop</CpuCell>
                    <CpuCell $width={55}>SW : 1</CpuCell>
                    <CpuCell $width={83} $align="space-between"><span>SCB</span><span>0.00 ms</span></CpuCell>
                    <CpuCell $width={42} $last><Lamp $wide>Writing</Lamp></CpuCell>
                </CpuCells>
            </CpuBar>

            <CrossDock>
                <CrossSide>
                    <CloseButton type="button" aria-label="Close cross reference"><CrossGlyph /></CloseButton>
                    <VerticalGrip $vertical><span /><span /></VerticalGrip>
                </CrossSide>
                <CrossBody>
                    <CrossForm>
                        <CheckRow>
                            <Check><CheckInput type="checkbox" disabled />Auto Search</Check>
                            <Check><CheckInput type="checkbox" disabled />Online</Check>
                        </CheckRow>
                        <ComboBox label="Device" width={152} value="" disabled />
                        <ComboBox label="Scope" width={153} value="Project" flat disabled />
                        <ComboBox label="Block" width={152} value="" disabled />
                        <CrossButtons>
                            <Tools names={['refresh', 'upload', 'jump', 'help']} />
                            <Tools names={['binoculars']} />
                        </CrossButtons>
                    </CrossForm>
                    <SheetTabs>
                        <SheetTab type="button">
                            <svg width="128" height="17" viewBox="0 0 128 17" aria-hidden="true">
                                <path d="M.5 0l8 16.500h110l8-16.500" fill="#fff" />
                                <path d="M8 16.500h110" stroke="#808080" />
                                <path d="M.5 0l8 16.500M118.500 16.500l8-16.500" stroke="#000" fill="none" />
                            </svg>
                            <span>Cross-Reference</span>
                        </SheetTab>
                        <SheetLine />
                    </SheetTabs>
                </CrossBody>
            </CrossDock>

            <StatusBar>
                <StatusCell>Ready</StatusCell>
                <StatusCell $width={113}>Connect(Port1)</StatusCell>
                <StatusCell $width={227}>192.168.30.246,1</StatusCell>
                <StatusCell $width={106}>F3SP71-4N/R09/</StatusCell>
                <StatusCell $width={137} />
                <StatusCell $width={65} />
            </StatusBar>
            <TaskBar>
                <StartSvg width="165" height="8" viewBox="0 0 165 8" aria-hidden="true">
                    <circle cx="27" cy="17" r="16" fill="#7fa3c4" stroke="#c5d8e8" />
                    <path d="M75 6h14v2h-14z" fill="#d8b878" />
                    <path d="M145 8q8-5 14-4l5-2v6z" fill="#d7ecd0" />
                    <path d="M152 5q8-4 12 1" stroke="#3faa2c" strokeWidth="2" fill="none" />
                </StartSvg>
                <TaskItem type="button" aria-label="Browser"><span /></TaskItem>
                <TaskItem type="button" aria-label="WideField3" $active><span /></TaskItem>
                <ShowDesktop />
            </TaskBar>
        </Shell>
    )
}

export default App;
